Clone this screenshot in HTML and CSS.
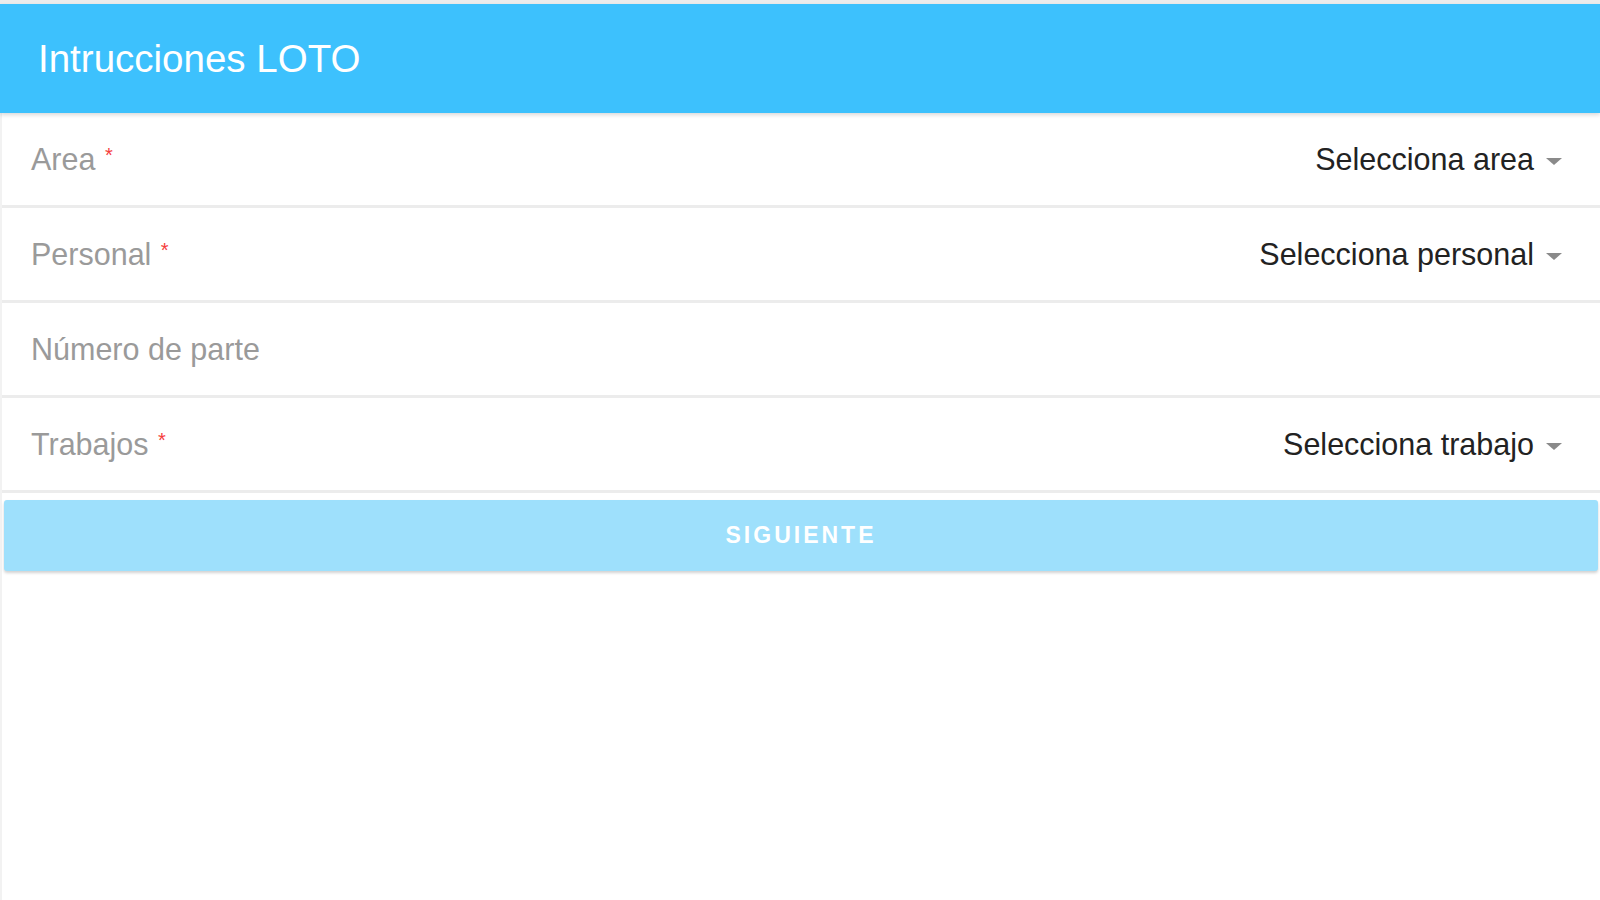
FILE: index.html
```html
<!DOCTYPE html>
<html>
<head>
  <title>Intrucciones LOTO</title>
  <link rel="stylesheet" href="styles.css">
</head>
<body>
  <div class="topbar"></div>
  <header class="toolbar">
    <h1>Intrucciones LOTO</h1>
  </header>
  <div class="content">
    <div class="list">
      <div class="item">
        <span class="label">Area <span class="req">*</span></span>
        <span class="select">Selecciona area <span class="caret"></span></span>
      </div>
      <div class="item">
        <span class="label">Personal <span class="req">*</span></span>
        <span class="select">Selecciona personal <span class="caret"></span></span>
      </div>
      <div class="item">
        <span class="label">Número de parte</span>
      </div>
      <div class="item">
        <span class="label">Trabajos <span class="req">*</span></span>
        <span class="select">Selecciona trabajo <span class="caret"></span></span>
      </div>
    </div>
    <div class="actions">
      <button class="btn" disabled>SIGUIENTE</button>
    </div>
  </div>
</body>
</html>
```

FILE: styles.css
```css
body {
  margin: 0;
  background-color: #fff;
  font-family: "Liberation Sans", Arial, sans-serif;
}

.topbar {
  height: 4px;
  background-color: #ececec;
}

.toolbar {
  background-color: #3dc1fd;
  height: 109px;
  display: flex;
  align-items: center;
  padding-left: 38px;
  box-shadow: 0 2px 4px rgba(0, 0, 0, 0.15);
  position: relative;
}

.toolbar h1 {
  margin: 0;
  color: #fff;
  font-size: 38.5px;
  font-weight: normal;
  padding-top: 1px;
}

.content {
  border-left: 2px solid #f2f2f2;
  height: 787px;
}

.item {
  height: 92px;
  border-bottom: 3px solid #ececec;
  display: flex;
  align-items: center;
  justify-content: space-between;
  padding: 0 38px 0 29px;
}

.label {
  color: #9a9a9a;
  font-size: 30.5px;
}

.req {
  color: #f53d3d;
  font-size: 20px;
  vertical-align: 8px;
  margin-left: 1px;
}

.select {
  color: #222;
  font-size: 30.5px;
  display: flex;
  align-items: center;
}

.caret {
  display: inline-block;
  width: 0;
  height: 0;
  margin-left: 12px;
  margin-top: 4px;
  border-left: 8px solid transparent;
  border-right: 8px solid transparent;
  border-top: 7px solid #8a8a8a;
}

.actions {
  padding: 7px 2px 0 2px;
}

.btn {
  display: block;
  width: 100%;
  height: 71px;
  border: none;
  border-radius: 3px;
  background-color: #9ee0fc;
  color: #fff;
  font-family: "Liberation Sans", Arial, sans-serif;
  font-weight: bold;
  font-size: 23px;
  letter-spacing: 3px;
  box-shadow: 0 2px 3px rgba(0, 0, 0, 0.18);
}
```
